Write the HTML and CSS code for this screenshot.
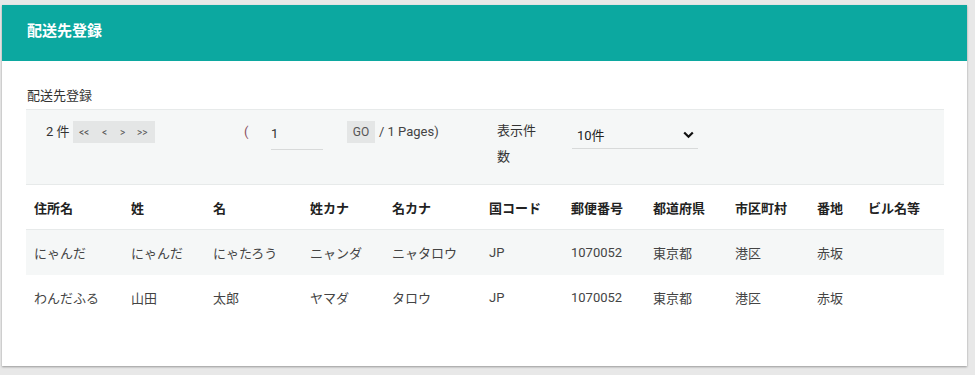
FILE: index.html
```html
<!DOCTYPE html>
<html lang="ja">
<head>
<meta charset="utf-8">
<link rel="stylesheet" href="styles.css">
</head>
<body>
<div class="card">
  <div class="card-header">配送先登録</div>
  <div class="card-body">
    <div class="section-label">配送先登録</div>
    <div class="filter">
      <div class="count">2 件</div>
      <div class="pager">
        <span>&lt;&lt;</span><span>&lt;</span><span>&gt;</span><span>&gt;&gt;</span>
      </div>
      <div class="paren">(</div>
      <div class="page-input">1</div>
      <div class="go">GO</div>
      <div class="pages">/ 1 Pages)</div>
      <div class="per-label">表示件数</div>
      <div class="select">
        <span>10件</span>
        <svg width="11" height="8" viewBox="0 0 11 8"><path d="M1.2 1.5 L5.5 5.8 L9.8 1.5" fill="none" stroke="#111" stroke-width="2.2"/></svg>
      </div>
    </div>
    <table class="list">
      <colgroup>
        <col class="w97"><col class="w82"><col class="w97"><col class="w82"><col class="w97"><col class="w82"><col class="w82"><col class="w82"><col class="w82"><col class="w51"><col class="w84">
      </colgroup>
      <thead>
        <tr><th>住所名</th><th>姓</th><th>名</th><th>姓カナ</th><th>名カナ</th><th>国コード</th><th>郵便番号</th><th>都道府県</th><th>市区町村</th><th>番地</th><th>ビル名等</th></tr>
      </thead>
      <tbody>
        <tr class="alt"><td>にゃんだ</td><td>にゃんだ</td><td>にゃたろう</td><td>ニャンダ</td><td>ニャタロウ</td><td>JP</td><td>1070052</td><td>東京都</td><td>港区</td><td>赤坂</td><td></td></tr>
        <tr><td>わんだふる</td><td>山田</td><td>太郎</td><td>ヤマダ</td><td>タロウ</td><td>JP</td><td>1070052</td><td>東京都</td><td>港区</td><td>赤坂</td><td></td></tr>
      </tbody>
    </table>
  </div>
</div>
</body>
</html>
```

FILE: styles.css
```css
html, body {
  margin: 0;
  background: #e8e8e8;
}
body {
  padding: 5px 8px 9px 2px;
  font-family: Roboto, "Noto Sans CJK JP", sans-serif;
  color: #444;
  font-size: 13px;
}
.card {
  background: #fff;
  box-shadow: 0 1px 2px rgba(0,0,0,0.35);
  height: 361px;
  box-sizing: border-box;
}
.card-header {
  background: #0ca8a0;
  height: 56px;
  box-sizing: border-box;
  padding: 16px 0 0 25px;
  color: #fff;
  font-weight: bold;
  font-size: 15px;
  line-height: 20px;
}
.card-body {
  padding: 25px 23px 0 24px;
}
.section-label {
  font-size: 13px;
  line-height: 20px;
  color: #333;
  padding-left: 1px;
  margin-bottom: 3px;
}
.filter {
  background: #f5f7f7;
  border-top: 1px solid #e7eaea;
  display: flex;
  align-items: flex-start;
  padding-top: 12px;
  box-sizing: border-box;
  height: 75px;
}
.count {
  margin-left: 20px;
  width: 27px;
  line-height: 20px;
  color: #333;
}
.pager {
  display: flex;
  align-items: center;
  background: #e4e6e6;
  height: 22px;
  width: 82px;
  box-sizing: border-box;
  padding-left: 6px;
  font-size: 10px;
  color: #555;
  margin-top: -1px;
}
.pager span:nth-child(1) { width: 23px; }
.pager span:nth-child(2) { width: 18px; }
.pager span:nth-child(3) { width: 17px; }
.paren {
  margin-left: 89px;
  width: 27px;
  line-height: 20px;
  color: #8a5060;
}
.page-input {
  width: 52px;
  height: 29px;
  border-bottom: 1px solid #d8dada;
  line-height: 28px;
  color: #333;
  margin-top: -2px;
}
.go {
  margin-left: 24px;
  background: #e4e6e6;
  width: 28px;
  height: 22px;
  text-align: center;
  font-size: 12px;
  line-height: 22px;
  color: #555;
  margin-top: -1px;
}
.pages {
  margin-left: 4px;
  width: 118px;
  line-height: 20px;
  color: #444;
}
.per-label {
  width: 42px;
  line-height: 26px;
  margin-top: -4px;
  color: #333;
}
.select {
  margin-left: 33px;
  width: 126px;
  height: 29px;
  border-bottom: 1px solid #d8dada;
  display: flex;
  align-items: center;
  justify-content: space-between;
  box-sizing: border-box;
  padding: 0 4px 0 5px;
  color: #222;
  margin-top: -2px;
}
.select svg { margin-top: 1px; }
.list {
  width: 918px;
  border-collapse: collapse;
  table-layout: fixed;
}
.w97 { width: 97px; }
.w82 { width: 82px; }
.w51 { width: 51px; }
.w84 { width: 84px; }
.list th, .list td {
  text-align: left;
  padding: 0 8px;
  height: 45px;
  box-sizing: border-box;
  white-space: nowrap;
}
.list thead th {
  border-top: 1px solid #e7eaea;
  border-bottom: 1px solid #e7eaea;
  font-weight: bold;
  color: #222;
  font-size: 13px;
}
.list td {
  color: #444;
  font-size: 13px;
}
.list tr.alt td {
  background: #f5f7f7;
}
```
